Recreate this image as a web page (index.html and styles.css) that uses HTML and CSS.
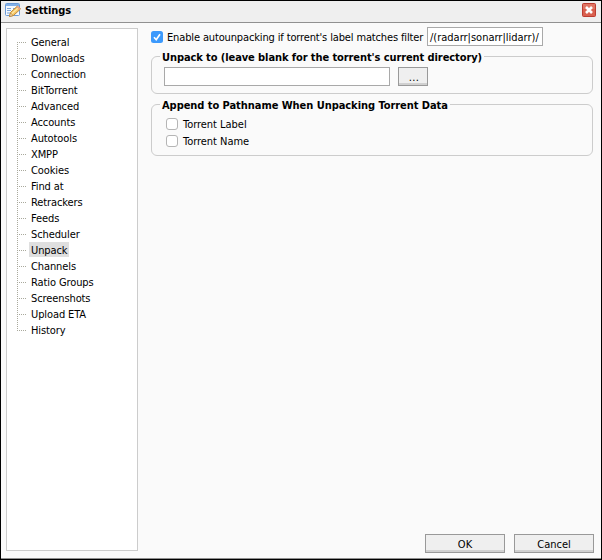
FILE: index.html
```html
<!DOCTYPE html>
<html lang="en">
<head>
<meta charset="utf-8">
<title>Settings</title>
<link rel="stylesheet" href="styles.css">
</head>
<body>
<div class="dialog">
  <header class="titlebar">
    <svg class="title-icon" width="16" height="16" viewBox="0 0 16 16">
      <rect x=".5" y="1.5" width="14" height="12" rx="1" fill="#f4f9ff" stroke="#6b9bd8"/>
      <path d="M1 2h13v2H1z" fill="#82b0e8"/>
      <path d="M2 6.500h4M2 8.500h4M2 11h3M8 6.500h5" stroke="#7ba4d8"/>
      <path d="M4.500 14.500l1-4 7-6.500 3 3-7 6.500z" fill="#f5c664" stroke="#bd8534"/>
      <path d="M7 11.500l6-5.500" stroke="#ffe7a5" stroke-width="1.300"/>
      <path d="M11.500 5l1.200-1.200 2.800 2.800-1.200 1.300z" fill="#e9a48c"/>
      <path d="M4.500 14.500l1-3.500 2.500 2.500z" fill="#f8dfb5" stroke="#a97832" stroke-width=".6"/>
    </svg>
    <h1>Settings</h1>
    <svg class="close" width="14" height="14" viewBox="0 0 14 14">
      <rect x=".5" y=".5" width="13" height="13" rx="1" fill="#d9604f" stroke="#bd3c31"/>
      <path d="M1 1h12v5H1z" fill="#e58373" opacity=".6"/>
      <path d="M4 4l6 6M10 4l-6 6" stroke="#fff" stroke-width="2.600"/>
    </svg>
  </header>
  <div class="content">
    <nav class="sidebar">
      <ul class="tree">
        <li><span>General</span></li>
        <li><span>Downloads</span></li>
        <li><span>Connection</span></li>
        <li><span>BitTorrent</span></li>
        <li><span>Advanced</span></li>
        <li><span>Accounts</span></li>
        <li><span>Autotools</span></li>
        <li><span>XMPP</span></li>
        <li><span>Cookies</span></li>
        <li><span>Find at</span></li>
        <li><span>Retrackers</span></li>
        <li><span>Feeds</span></li>
        <li><span>Scheduler</span></li>
        <li><span class="selected">Unpack</span></li>
        <li><span>Channels</span></li>
        <li><span>Ratio Groups</span></li>
        <li><span>Screenshots</span></li>
        <li><span>Upload ETA</span></li>
        <li><span>History</span></li>
      </ul>
    </nav>
    <main class="page">
      <div class="enable-row">
        <svg class="check" width="12" height="12" viewBox="0 0 12 12">
          <rect width="12" height="12" rx="2.500" fill="#3b99fc"/>
          <path d="M3 6.300l2.200 2.400L9 3.300" fill="none" stroke="#fff" stroke-width="1.700"/>
        </svg>
        <span class="enable-label">Enable autounpacking if torrent's label matches filter</span>
        <div class="field filter">/(radarr|sonarr|lidarr)/</div>
      </div>
      <section class="group group-path">
        <h2 class="legend-path">Unpack to (leave blank for the torrent's current directory)</h2>
        <div class="path-row">
          <div class="field path"></div>
          <div class="button browse">...</div>
        </div>
      </section>
      <section class="group group-append">
        <h2 class="legend-append">Append to Pathname When Unpacking Torrent Data</h2>
        <div class="option"><i class="box"></i><span>Torrent Label</span></div>
        <div class="option"><i class="box"></i><span>Torrent Name</span></div>
      </section>
      <footer class="actions">
        <div class="button">OK</div>
        <div class="button">Cancel</div>
      </footer>
    </main>
  </div>
</div>
</body>
</html>
```
FILE: styles.css
```css
* { box-sizing: border-box; }
body {
  margin: 0;
  font: 11px/16px "DejaVu Sans Condensed", "DejaVu Sans", sans-serif;
  font-stretch: condensed;
  color: #000;
}
.dialog {
  width: 602px;
  height: 560px;
  border: 1px solid #000;
  background: #fafafa;
  box-shadow: inset 0 -1px #8f8f8f;
  display: flex;
  flex-direction: column;
}
.titlebar {
  height: 22px;
  display: flex;
  align-items: center;
  padding: 0 5px 3px 4px;
  background: #efefef;
  border-bottom: 1px solid #919191;
}
h1 {
  margin: 1px auto 0 4px;
  font-size: 11px;
  line-height: 16px;
  letter-spacing: -.1px;
}
.content { display: flex; flex: 1; padding: 5px 7px 0 5px; }
.sidebar {
  width: 132px;
  height: 523px;
  border: 1px solid #ccc;
  background: #fff;
  padding: 6px 0 0 10px;
}
.tree { list-style: none; margin: 0; padding: 0; }
.tree li {
  height: 16px;
  display: flex;
  align-items: flex-start;
  background:
    repeating-linear-gradient(to right, #a9a99c 0 1px, transparent 1px 2px) 0 7px / 9px 1px no-repeat,
    repeating-linear-gradient(to bottom, transparent 0 1px, #a9a99c 1px 2px) 0 0 / 1px 16px no-repeat;
}
.tree li:first-child {
  background:
    repeating-linear-gradient(to right, #a9a99c 0 1px, transparent 1px 2px) 0 7px / 9px 1px no-repeat,
    repeating-linear-gradient(to bottom, transparent 0 1px, #a9a99c 1px 2px) 0 8px / 1px 8px no-repeat;
}
.tree li:last-child {
  background:
    repeating-linear-gradient(to right, #a9a99c 0 1px, transparent 1px 2px) 0 7px / 9px 1px no-repeat,
    repeating-linear-gradient(to bottom, transparent 0 1px, #a9a99c 1px 2px) 0 0 / 1px 8px no-repeat;
}
.tree span {
  height: 15px;
  margin: -1px 0 0 12px;
  padding: 0 2px;
  line-height: 17px;
  letter-spacing: -.1px;
  white-space: nowrap;
}
.tree .selected { background: #dfdfdf; }
.page {
  flex: 1;
  margin-left: 13px;
  display: flex;
  flex-direction: column;
  min-width: 0;
}
.enable-row { height: 19px; display: flex; align-items: center; margin-top: -1px; }
.check { flex: none; }
.enable-label { width: 260px; margin: 2px 0 0 4px; letter-spacing: -.14px; white-space: nowrap; }
.field { height: 19px; border: 1px solid #a9a9a9; background: #fff; white-space: nowrap; }
.filter { width: 116px; padding-left: 2px; line-height: 19px; }
.group { width: 442px; border: 1px solid #ccc; border-radius: 6px; }
.group-path { height: 38px; margin-top: 10px; }
.group-append { height: 52px; margin-top: 10px; }
h2 {
  width: max-content;
  height: 12px;
  margin: -6px 0 0 8px;
  padding: 0 2px;
  font-size: 11px;
  line-height: 13px;
  white-space: nowrap;
  background: #fafafa;
}
.legend-path { letter-spacing: -.09px; }
.legend-append { letter-spacing: -.05px; }
.path-row { display: flex; gap: 8px; margin: 4px 0 0 12px; }
.path { width: 226px; }
.button {
  width: 80px;
  height: 19px;
  border: 1px solid #999;
  background: #efefef;
  box-shadow: inset 0 -2px #d0d0d0;
  text-align: center;
  line-height: 19px;
}
.browse { width: 30px; padding-left: 2px; letter-spacing: .4px; }
.option { display: flex; align-items: center; height: 17px; padding-left: 14px; gap: 5px; letter-spacing: -.03px; }
.group-append h2 { margin-bottom: 4px; }
.option span { padding-top: 2px; }
.box { width: 12px; height: 12px; border: 1px solid #b5b5b5; border-radius: 3px; background: #fff; }
.actions { display: flex; justify-content: flex-end; gap: 9px; margin-top: auto; margin-bottom: 6px; }
```
